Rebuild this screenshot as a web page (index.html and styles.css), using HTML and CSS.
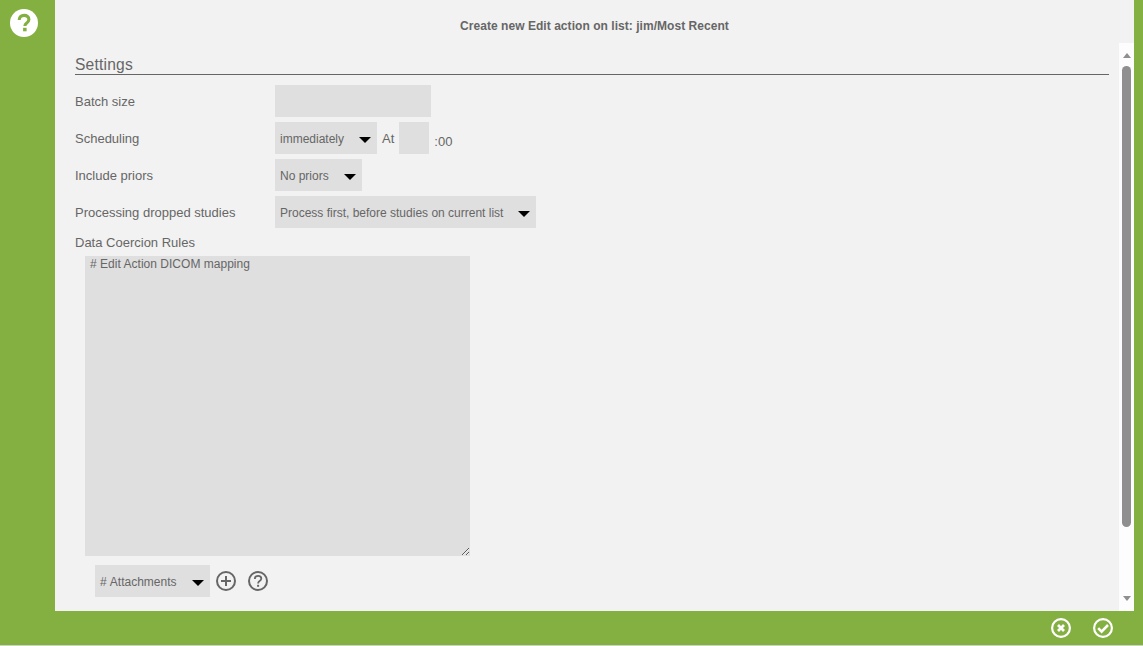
FILE: index.html
```html
<!DOCTYPE html>
<html lang="en">
<head>
<meta charset="utf-8">
<title>Create new Edit action</title>
<link rel="stylesheet" href="styles.css">
</head>
<body>
<div class="app">
  <aside class="rail">
    <svg class="help" width="28" height="28" viewBox="0 0 28 28">
      <circle cx="14" cy="14" r="14" fill="#fff"/>
      <path d="M9.2 11 C9.2 7.9 11.4 6.4 14.1 6.4 C16.9 6.4 18.9 8 18.9 10.5 C18.9 12.4 17.8 13.3 16.5 14.2 C15.2 15.1 14.9 15.6 14.9 17" fill="none" stroke="#84AF41" stroke-width="3.1"/>
      <rect x="13.1" y="18.8" width="3.5" height="3.5" fill="#84AF41"/>
    </svg>
  </aside>
  <main class="dialog">
    <h1 class="title">Create new Edit action on list: jim/Most Recent</h1>
    <div class="body">
      <form class="content">
        <h2 class="section">Settings</h2>
        <div class="row row-first">
          <label class="label">Batch size</label>
          <input class="input input-batch" type="text">
        </div>
        <div class="row">
          <label class="label">Scheduling</label>
          <div class="select sel-sched"><span>immediately</span><i class="caret"></i></div>
          <span class="at">At</span>
          <input class="input input-hour" type="text">
          <span class="mins">:00</span>
        </div>
        <div class="row">
          <label class="label">Include priors</label>
          <div class="select sel-priors"><span>No priors</span><i class="caret"></i></div>
        </div>
        <div class="row">
          <label class="label">Processing dropped studies</label>
          <div class="select sel-drop"><span>Process first, before studies on current list</span><i class="caret"></i></div>
        </div>
        <div class="rules-label">Data Coercion Rules</div>
        <textarea class="rules" spellcheck="false"># Edit Action DICOM mapping</textarea>
        <div class="attach">
          <div class="select sel-attach"><span># Attachments</span><i class="caret"></i></div>
          <svg class="tool tool-plus" width="22" height="22" viewBox="0 0 22 22" fill="none" stroke="#666" stroke-width="2">
            <circle cx="11" cy="11" r="9"/>
            <path d="M11 6v10M6 11h10"/>
          </svg>
          <svg class="tool tool-q" width="22" height="22" viewBox="0 0 22 22" fill="none" stroke="#666" stroke-width="2">
            <circle cx="11" cy="11" r="9"/>
            <path d="M7.8 9c0-2 1.4-3.2 3.3-3.2s3.2 1.1 3.2 2.8c0 1.3-.8 1.9-1.7 2.5-.9.6-1.5 1.1-1.5 2.3" stroke-width="1.8"/>
            <path d="M10.1 14.8h2v2h-2z" fill="#666" stroke="none"/>
          </svg>
        </div>
      </form>
      <div class="scrollbar">
        <i class="arrow arrow-up"></i>
        <div class="track"><div class="thumb"></div></div>
        <i class="arrow arrow-down"></i>
      </div>
    </div>
  </main>
</div>
<footer class="footer">
  <svg width="22" height="22" viewBox="0 0 22 22" fill="none" stroke="#fff" stroke-width="2.2">
    <circle cx="11" cy="11" r="8.9"/>
    <path d="M8 8l6 6M14 8l-6 6" stroke-width="2.8"/>
  </svg>
  <svg width="22" height="22" viewBox="0 0 22 22" fill="none" stroke="#fff" stroke-width="2.2">
    <circle cx="11" cy="11" r="8.9"/>
    <path d="M6.2 11.2l3.4 3.4 6.4-6.6" stroke-width="2.6"/>
  </svg>
</footer>
</body>
</html>
```

FILE: styles.css
```css
* { box-sizing: border-box; }
html, body { margin: 0; height: 100%; overflow: hidden; }
body {
  background: #84AF41;
  font-family: "Liberation Sans", Arial, sans-serif;
  font-size: 13px;
  color: #666;
  height: 646px;
  display: flex;
  flex-direction: column;
}
.app { display: flex; height: 611px; padding-right: 9px; }
.rail { width: 55px; flex: none; padding: 9px 0 0 10px; }
.help { display: block; }
.dialog {
  flex: 1;
  background: #F2F2F2;
  display: flex;
  flex-direction: column;
  min-width: 0;
}
.title {
  margin: 0;
  height: 43px;
  padding-top: 19px;
  font-size: 12px;
  line-height: 14px;
  font-weight: bold;
  letter-spacing: .045px;
  text-align: center;
  color: #666;
}
.body { flex: 1; display: flex; min-height: 0; }
.content { flex: 1; padding: 13px 10px 0 20px; min-width: 0; }
.section {
  margin: 0;
  height: 19px;
  font-size: 15.6px;
  font-weight: normal;
  letter-spacing: .2px;
  line-height: 18px;
  color: #666;
  border-bottom: 1px solid #666;
}
.row { display: flex; height: 32px; margin-top: 5px; align-items: center; }
.row-first { margin-top: 10px; }
.label { width: 200px; flex: none; }
.input { background: #DFDFDF; border: 0; height: 32px; padding: 0; display: block; }
.input-batch { width: 156px; }
.input-hour { width: 30px; }
.at { margin: 0 5px 0 5px; }
.mins { margin-left: 5px; padding-top: 6px; }
.select {
  background: #DFDFDF;
  height: 32px;
  display: flex;
  align-items: center;
  justify-content: space-between;
  padding: 2px 6px 0 5px;
  font-size: 12px;
  flex: none;
}
.caret {
  display: block;
  width: 0;
  height: 0;
  margin-top: 2px;
  border: 6px solid transparent;
  border-top: 6px solid #000;
  border-bottom: 0;
}
.sel-sched { width: 102px; }
.sel-priors { width: 87px; }
.sel-drop { width: 261px; }
.sel-attach { width: 115px; word-spacing: .5px; }
.rules-label { margin-top: 7px; margin-bottom: 6px; height: 15px; line-height: 15px; }
.rules {
  display: block;
  width: 385px;
  height: 300px;
  margin: 0 0 0 10px;
  padding: 1px 5px;
  border: 0;
  outline: 0;
  background: #DFDFDF;
  color: #666;
  font-family: "Liberation Sans", Arial, sans-serif;
  font-size: 12px;
  letter-spacing: .02px;
  line-height: 14px;
  resize: both;
}
.attach { display: flex; align-items: center; margin: 9px 0 0 20px; }
.tool-plus { margin-left: 5px; }
.tool-q { margin-left: 10px; }
.scrollbar {
  width: 15px;
  flex: none;
  background: #FDFDFD;
  display: flex;
  flex-direction: column;
  align-items: center;
}
.track { flex: 1; width: 100%; padding: 8px 3px 0; }
.thumb { height: 461px; background: #8F8F8F; border-radius: 5px; }
.arrow { display: block; width: 0; height: 0; border: 4.5px solid transparent; }
.arrow-up { border-top: 0; border-bottom: 5px solid #8F8F8F; margin-top: 10px; }
.arrow-down { border-bottom: 0; border-top: 5px solid #8F8F8F; margin-bottom: 10px; }
.footer {
  height: 35px;
  border-bottom: 1px solid #C5D5C8;
  display: flex;
  justify-content: flex-end;
  align-items: center;
  gap: 20px;
  padding: 0 29px 0 0;
}
```
